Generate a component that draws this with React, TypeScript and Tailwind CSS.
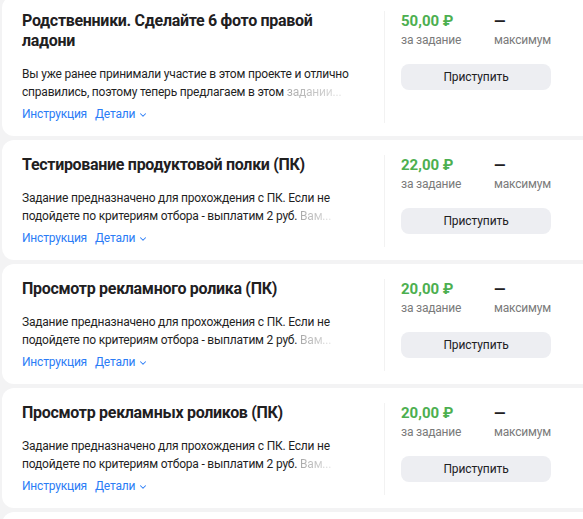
import { ChevronDown } from 'lucide-react'

type Task = {
  title: string[]
  lines: [string, string]
  tail: string
  price: string
}

const tasks: Task[] = [
  {
    title: ['Родственники. Сделайте 6 фото правой', 'ладони'],
    lines: [
      'Вы уже ранее принимали участие в этом проекте и отлично',
      'справились, поэтому теперь предлагаем в этом ',
    ],
    tail: 'задании...',
    price: '50,00 ₽',
  },
  {
    title: ['Тестирование продуктовой полки (ПК)'],
    lines: [
      'Задание предназначено для прохождения с ПК. Если не',
      'подойдете по критериям отбора - выплатим 2 руб. ',
    ],
    tail: 'Вам...',
    price: '22,00 ₽',
  },
  {
    title: ['Просмотр рекламного ролика (ПК)'],
    lines: [
      'Задание предназначено для прохождения с ПК. Если не',
      'подойдете по критериям отбора - выплатим 2 руб. ',
    ],
    tail: 'Вам...',
    price: '20,00 ₽',
  },
  {
    title: ['Просмотр рекламных роликов (ПК)'],
    lines: [
      'Задание предназначено для прохождения с ПК. Если не',
      'подойдете по критериям отбора - выплатим 2 руб. ',
    ],
    tail: 'Вам...',
    price: '20,00 ₽',
  },
]

function TaskCard({ task }: { task: Task }) {
  return (
    <div className="flex rounded-[12px] bg-white pt-[15px] pb-[13px]">
      {/* left: title, description, links */}
      <div className="w-[361px] shrink-0 pl-[20px]">
        <h2 className="text-[16px] leading-[20px] font-bold tracking-[-0.3px] text-[#21201f]">
          {task.title.map((l) => (
            <span key={l} className="block whitespace-nowrap">{l}</span>
          ))}
        </h2>
        <p className="mt-[14px] text-[12px] leading-[18px] tracking-[-0.2px] text-[#1f1f1f]">
          <span className="block whitespace-nowrap">{task.lines[0]}</span>
          <span className="block whitespace-nowrap">
            {task.lines[1]}
            <span className="bg-gradient-to-r from-[#a8a8a8] to-[#e2e2e2] bg-clip-text text-transparent">
              {task.tail}
            </span>
          </span>
        </p>
        <div className="mt-[4px] flex items-center gap-[8px] text-[12px] leading-[18px] tracking-[-0.2px] text-[#2a7cf6]">
          <span>Инструкция</span>
          <span className="flex items-center gap-[3px]">
            Детали
            <ChevronDown size={10} strokeWidth={2.5} className="mt-[1px]" />
          </span>
        </div>
      </div>

      {/* right: reward and action */}
      <div className="ml-[21px] border-l border-[#f2f2f2] pl-[16px]">
        <div className="flex">
          <div className="w-[93px]">
            <div className="text-[15px] leading-[20px] font-bold text-[#4caf50]">{task.price}</div>
            <div className="text-[12px] leading-[18px] tracking-[-0.2px] text-[#7a7a7a]">за задание</div>
          </div>
          <div>
            <div className="text-[15px] leading-[20px] font-bold text-[#21201f]">—</div>
            <div className="text-[12px] leading-[18px] tracking-[-0.2px] text-[#7a7a7a]">максимум</div>
          </div>
        </div>
        <button
          type="button"
          className="mt-[15px] flex h-[26px] w-[150px] items-center justify-center rounded-[8px] bg-[#edeef2] text-[12px] tracking-[-0.1px] text-[#21201f]"
        >
          Приступить
        </button>
      </div>
    </div>
  )
}

export default function App() {
  return (
    <div className="h-[519px] overflow-hidden bg-[#f3f3f4] font-['Roboto',sans-serif]">
      <div className="-mt-[4px] flex w-[600px] flex-col gap-[4px] pl-[2px]">
        {tasks.map((t) => (
          <TaskCard key={t.title[0]} task={t} />
        ))}
        <div className="h-[40px] rounded-[12px] bg-white" />
      </div>
    </div>
  )
}
